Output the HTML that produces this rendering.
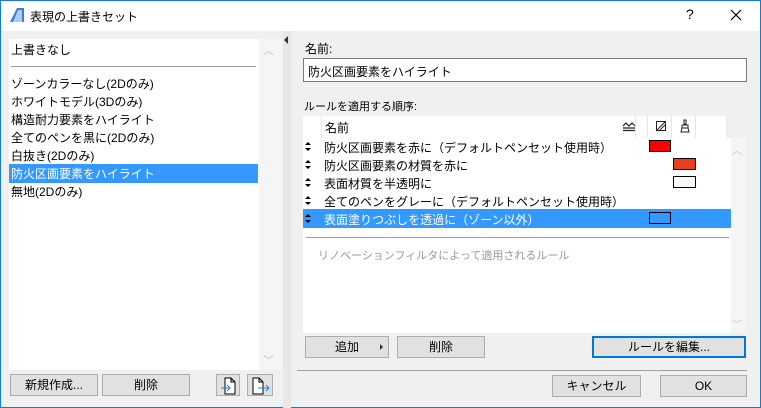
<!DOCTYPE html>
<html><head><meta charset="utf-8"><style>
*{margin:0;padding:0;box-sizing:border-box}
body{width:761px;height:408px;overflow:hidden;background:#f0f0f0;font-family:"Liberation Sans","Noto Sans CJK JP",sans-serif;font-size:12px;color:#000;position:relative}
.a{position:absolute;white-space:nowrap}
.btn{position:absolute;background:#e1e1e1;border:1px solid #adadad;text-align:center;line-height:20px}
.ud{position:absolute;left:305px}
</style></head><body>
<div class="a" style="left:0;top:0;width:761px;height:408px;border:1px solid #1a7ad0"></div>
<div class="a" style="left:1px;top:1px;width:759px;height:30px;background:#fff"></div>
<svg class="a" style="left:9px;top:7px" width="16" height="16"><path d="M1 15 L8 1 L15 1 L15 15 Z" fill="#3a7fd8"/><path d="M4 15 L9 3 L13 3 L13 15Z" fill="#a9cdf5"/></svg>
<div class="a" style="left:30px;top:8px;font-size:12px">表現の上書きセット</div>
<div class="a" style="left:686px;top:6px;font-size:14px">?</div>
<svg class="a" style="left:730px;top:9px" width="12" height="12"><path d="M1 1L11 11M11 1L1 11" stroke="#000" stroke-width="1.2"/></svg>

<div class="a" style="left:9px;top:39px;width:250px;height:331px;background:#fff"></div>
<div class="a" style="left:259px;top:39px;width:24px;height:331px;background:#f5f5f5"></div>
<div class="a" style="left:263px;top:42px;color:#c0c0c0;font-size:11px">︿</div>
<div class="a" style="left:263px;top:352px;color:#c0c0c0;font-size:11px">﹀</div>
<div class="a" style="left:283px;top:31px;width:8px;height:377px;background:#e8e8e8"></div>
<div class="a" style="left:284px;top:36px;width:0;height:0;border-top:4px solid transparent;border-bottom:4px solid transparent;border-right:4px solid #333"></div>
<div class="a" style="left:11px;top:41px">上書きなし</div>
<div class="a" style="left:11px;top:66px;width:245px;height:1px;background:#a0a0a0"></div>
<div class="a" style="left:11px;top:75px">ゾーンカラーなし(2Dのみ)</div>
<div class="a" style="left:11px;top:93px">ホワイトモデル(3Dのみ)</div>
<div class="a" style="left:11px;top:111px">構造耐力要素をハイライト</div>
<div class="a" style="left:11px;top:129px">全てのペンを黒に(2Dのみ)</div>
<div class="a" style="left:11px;top:147px">白抜き(2Dのみ)</div>
<div class="a" style="left:9px;top:164px;width:249px;height:19px;background:#3399ff"></div>
<div class="a" style="left:11px;top:165px;color:#fff">防火区画要素をハイライト</div>
<div class="a" style="left:11px;top:183px">無地(2Dのみ)</div>

<div class="btn" style="left:10px;top:374px;width:88px;height:22px">新規作成...</div>
<div class="btn" style="left:102px;top:374px;width:88px;height:22px">削除</div>
<div class="btn" style="left:216px;top:374px;width:24px;height:22px"></div>
<div class="btn" style="left:247px;top:374px;width:26px;height:22px"></div>
<svg class="a" style="left:218px;top:376px" width="22" height="20"><path d="M7 2H13L17 6V18H7Z M13 2V6H17" fill="#fff" stroke="#000"/><path d="M3 12H12M9 9L12 12L9 15" stroke="#2a7ae2" fill="none"/></svg>
<svg class="a" style="left:250px;top:376px" width="22" height="20"><path d="M3 2H9L13 6V18H3Z M9 2V6H13" fill="#fff" stroke="#000"/><path d="M8 12H19M16 9L19 12L16 15" stroke="#2a7ae2" fill="none"/></svg>

<div class="a" style="left:305px;top:40px">名前:</div>
<div class="a" style="left:303px;top:58px;width:444px;height:24px;background:#fff;border:1px solid #7a7a7a"></div>
<div class="a" style="left:308px;top:63px">防火区画要素をハイライト</div>
<div class="a" style="left:304px;top:98px;font-size:11px">ルールを適用する順序:</div>
<div class="a" style="left:303px;top:116px;width:423px;height:22px;background:#fff"></div>
<div class="a" style="left:321px;top:116px;width:1px;height:22px;background:#e5e5e5"></div>
<div class="a" style="left:635px;top:116px;width:1px;height:22px;background:#e5e5e5"></div>
<div class="a" style="left:647px;top:116px;width:1px;height:22px;background:#e5e5e5"></div>
<div class="a" style="left:671px;top:116px;width:1px;height:22px;background:#e5e5e5"></div>
<div class="a" style="left:695px;top:116px;width:1px;height:22px;background:#e5e5e5"></div>
<div class="a" style="left:325px;top:119px">名前</div>
<svg class="a" style="left:622px;top:120px" width="14" height="12"><path d="M1 6L4 3L7 6L10 3L13 6M1 8H13M1 10.5H13" stroke="#222" fill="none" stroke-width="1.2"/></svg>
<svg class="a" style="left:655px;top:120px" width="12" height="12"><rect x="1.5" y="1.5" width="9" height="9" fill="none" stroke="#222"/><path d="M2 10L10 2M5 10L10 5" stroke="#222"/></svg>
<svg class="a" style="left:680px;top:119px" width="10" height="14"><path d="M4 1H6V5H4Z M2 6H8V9H2Z M2 9L1 13H9L8 9" fill="none" stroke="#222"/></svg>
<div class="a" style="left:303px;top:138px;width:428px;height:195px;background:#fff"></div>
<div class="a" style="left:731px;top:138px;width:15px;height:195px;background:#f5f5f5"></div>
<div class="a" style="left:732px;top:142px;color:#c0c0c0;font-size:10px">︿</div>
<div class="a" style="left:732px;top:316px;color:#c0c0c0;font-size:10px">﹀</div>
<div class="a" style="left:303px;top:209px;width:428px;height:19px;background:#3399ff"></div>
<svg class="ud" style="top:142px" width="6" height="90"><g fill="#000"><path d="M0 3L3 0L6 3Z M0 6L3 9L6 6Z"/><path transform="translate(0,18)" d="M0 3L3 0L6 3Z M0 6L3 9L6 6Z"/><path transform="translate(0,36)" d="M0 3L3 0L6 3Z M0 6L3 9L6 6Z"/><path transform="translate(0,54)" d="M0 3L3 0L6 3Z M0 6L3 9L6 6Z"/><path transform="translate(0,72)" d="M0 3L3 0L6 3Z M0 6L3 9L6 6Z"/></g></svg>
<div class="a" style="left:324px;top:139px;line-height:18px">防火区画要素を赤に（デフォルトペンセット使用時）<br>防火区画要素の材質を赤に<br>表面材質を半透明に<br>全てのペンをグレーに（デフォルトペンセット使用時）<br><span style="color:#fff">表面塗りつぶしを透過に（ゾーン以外）</span></div>
<div class="a" style="left:649px;top:140px;width:22px;height:12px;background:#f00;border:1px solid #000"></div>
<div class="a" style="left:673px;top:158px;width:23px;height:12px;background:#e8401c;border:1px solid #000"></div>
<div class="a" style="left:673px;top:176px;width:23px;height:12px;background:#f8f8ff;border:1px solid #000"></div>
<div class="a" style="left:649px;top:212px;width:22px;height:12px;background:#3399ff;border:1px solid #000"></div>
<div class="a" style="left:306px;top:237px;width:423px;height:1px;background:#a0a0a0"></div>
<div class="a" style="left:318px;top:247px;color:#999;font-size:11px">リノベーションフィルタによって適用されるルール</div>

<div class="btn" style="left:305px;top:336px;width:84px;height:22px">追加</div>
<div class="a" style="left:380px;top:344px;border-top:3px solid transparent;border-bottom:3px solid transparent;border-left:3px solid #333"></div>
<div class="btn" style="left:397px;top:336px;width:88px;height:22px">削除</div>
<div class="btn" style="left:592px;top:336px;width:154px;height:22px;border:2px solid #0078d7;line-height:18px">ルールを編集...</div>
<div class="a" style="left:297px;top:370px;width:450px;height:1px;background:#a0a0a0"></div>
<div class="btn" style="left:552px;top:375px;width:89px;height:22px">キャンセル</div>
<div class="btn" style="left:660px;top:375px;width:87px;height:22px">OK</div>
</body></html>
